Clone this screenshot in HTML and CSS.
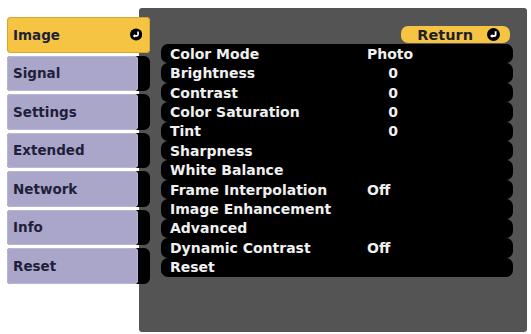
FILE: index.html
```html
<html>
    <head>
        <link rel="stylesheet" href="styles.css">
    </head>
    <body>
        <div id="screen">

            <!--Left menu tabs-->
            <div id="tabs">
                <div class="tab tab_active">
                    <span class="tab_label">Image</span>
                    <svg class="enter_icon" width="13" height="13" viewBox="0 0 13 13">
                        <circle cx="6.5" cy="6.5" r="6.5" fill="#000"/>
                        <path d="M8.6 3.2 V6.4 A1.6 1.6 0 0 1 7 8 H4.6" stroke="#fff" stroke-width="1.8" fill="none"/>
                        <polygon points="3,8 5.4,5.9 5.4,10.1" fill="#fff"/>
                    </svg>
                </div>
                <div class="tab"><span class="tab_label">Signal</span></div>
                <div class="tab"><span class="tab_label">Settings</span></div>
                <div class="tab"><span class="tab_label">Extended</span></div>
                <div class="tab"><span class="tab_label">Network</span></div>
                <div class="tab"><span class="tab_label">Info</span></div>
                <div class="tab"><span class="tab_label">Reset</span></div>
            </div>

            <!--Main gray panel-->
            <div id="panel">
                <div id="return_row">
                    <div id="return_button">
                        <span>Return</span>
                        <svg class="enter_icon" width="13" height="13" viewBox="0 0 13 13">
                            <circle cx="6.5" cy="6.5" r="6.5" fill="#000"/>
                            <path d="M8.6 3.2 V6.4 A1.6 1.6 0 0 1 7 8 H4.6" stroke="#fff" stroke-width="1.8" fill="none"/>
                            <polygon points="3,8 5.4,5.9 5.4,10.1" fill="#fff"/>
                        </svg>
                    </div>
                </div>

                <div id="settings_list">
                    <div class="row"><span class="name">Color Mode</span><span class="value">Photo</span></div>
                    <div class="row"><span class="name">Brightness</span><span class="value num">0</span></div>
                    <div class="row"><span class="name">Contrast</span><span class="value num">0</span></div>
                    <div class="row"><span class="name">Color Saturation</span><span class="value num">0</span></div>
                    <div class="row"><span class="name">Tint</span><span class="value num">0</span></div>
                    <div class="row"><span class="name">Sharpness</span></div>
                    <div class="row"><span class="name">White Balance</span></div>
                    <div class="row"><span class="name">Frame Interpolation</span><span class="value">Off</span></div>
                    <div class="row"><span class="name">Image Enhancement</span></div>
                    <div class="row"><span class="name">Advanced</span></div>
                    <div class="row"><span class="name">Dynamic Contrast</span><span class="value">Off</span></div>
                    <div class="row"><span class="name">Reset</span></div>
                </div>
            </div>

        </div>
    </body>
</html>
```

FILE: styles.css
```css
html,body{
    border:0;
    margin:0;
    padding:0;
    background: #fff;
}

body{
    font-family: "DejaVu Sans", Verdana, sans-serif;
    font-weight: bold;
}

#screen{
    display: flex;
    padding-left: 7px;
    height: 334px;
}

#tabs{
    position: relative;
    z-index: 1;
    display: flex;
    flex-direction: column;
    gap: 3px;
    width: 143px;
    margin-top: 17px;
}

.tab{
    height: 35.5px;
    background: #000;
    border-radius: 4px 6px 6px 4px;
    display: flex;
}

.tab .tab_label{
    width: 131px;
    background: #aaa6c9;
    border-radius: 4px;
    box-shadow: inset 0 0 0 1px #b9b6d6;
    color: #1f1f3a;
    font-size: 13.5px;
    padding-left: 6px;
    box-sizing: border-box;
    display: flex;
    align-items: center;
}

.tab_active{
    background: #f6c443;
    border-radius: 4px;
    align-items: center;
    justify-content: space-between;
    padding-right: 8px;
    box-shadow: inset 0 0 0 1px #d9a52c;
}

.tab_active .tab_label{
    background: none;
    box-shadow: none;
    height: 100%;
}

#panel{
    margin-left: -11px;
    margin-top: 8px;
    width: 388px;
    height: 324px;
    background: #545454;
    border-radius: 3px;
    box-sizing: border-box;
    padding: 18px 14px 0 22px;
}

#return_row{
    display: flex;
    justify-content: flex-end;
    padding-right: 3px;
    height: 18px;
}

#return_button{
    width: 109px;
    height: 17px;
    background: #f6c443;
    border-radius: 7px;
    display: flex;
    align-items: center;
    justify-content: flex-end;
    gap: 14px;
    padding-right: 10px;
    box-sizing: border-box;
    color: #1f1f2a;
    font-size: 14.5px;
}

#settings_list{
    height: 233px;
    display: grid;
    grid-template-rows: repeat(12, 1fr);
}

.row{
    background: #000;
    border-radius: 7px;
    display: flex;
    align-items: center;
    padding-left: 9px;
    color: #f0f0f0;
    font-size: 14px;
    line-height: 1;
}

.name{
    width: 197px;
}

.value{
    width: 52px;
}

.num{
    text-align: center;
}

.enter_icon{
    display: block;
}
```
